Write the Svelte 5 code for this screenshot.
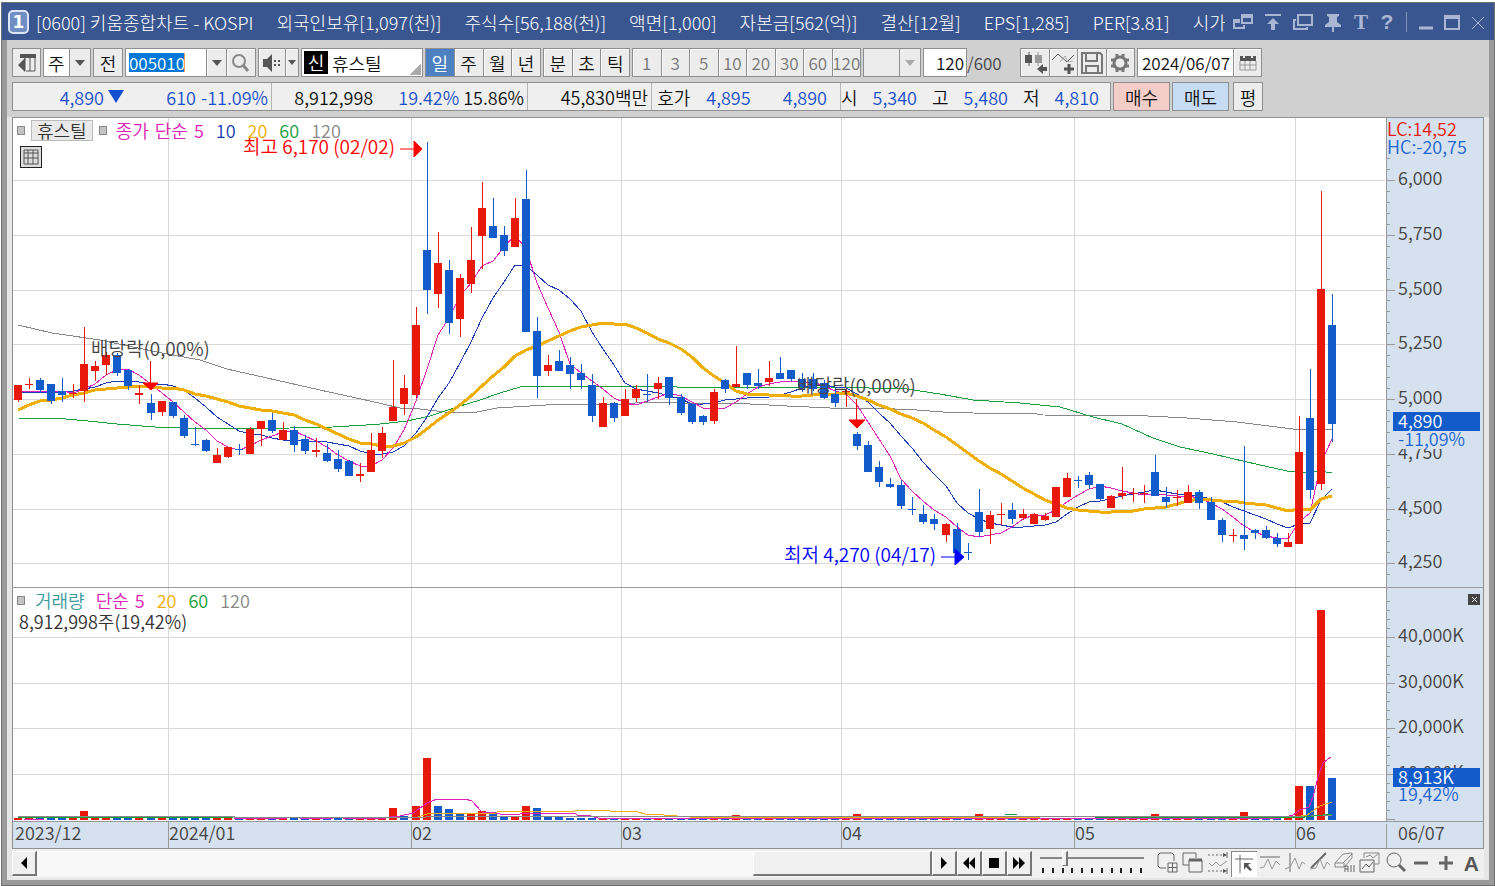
<script lang="ts">
  type Candle = [high: number, top: number, bottom: number, low: number, up: number];
  type Point = [number, number];

  const titleParts = [
    '[0600] 키움종합차트 - KOSPI',
    '외국인보유[1,097(천)]',
    '주식수[56,188(천)]',
    '액면[1,000]',
    '자본금[562(억)]',
    '결산[12월]',
    'EPS[1,285]',
    'PER[3.81]',
    '시가',
  ];

  const periods = ['일', '주', '월', '년'];
  const units = ['분', '초', '틱'];
  const counts = [1, 3, 5, 10, 20, 30, 60, 120];

  let code = '005010';
  let barCount = '120';
  let date = '2024/06/07';
  let period = '일';
  let speed = 2;

  // one row per trading day: high, body top, body bottom, low, up
  const candles: Candle[] = [
    [385, 385, 400, 402, 1], [378, 384, 385, 389, 1], [378, 380, 390, 393, 0], [384, 384, 401, 404, 0],
    [378, 391, 395, 402, 0], [384, 393, 394, 398, 1], [327, 364, 391, 402, 1], [361, 366, 371, 381, 1],
    [352, 355, 365, 375, 1], [353, 355, 373, 376, 0], [369, 370, 386, 390, 0], [385, 393, 395, 404, 1],
    [394, 403, 413, 420, 0], [401, 401, 412, 416, 1], [402, 402, 416, 418, 0], [415, 418, 436, 438, 0],
    [427, 444, 445, 446, 0], [439, 440, 451, 452, 0], [448, 455, 463, 463, 1], [447, 447, 457, 458, 1],
    [444, 449, 450, 455, 0], [427, 429, 454, 454, 1], [421, 421, 429, 446, 1], [413, 420, 431, 433, 0],
    [422, 430, 440, 440, 1], [426, 430, 445, 452, 0], [435, 439, 451, 454, 0], [438, 450, 452, 457, 1],
    [444, 453, 461, 462, 0], [450, 459, 469, 472, 0], [460, 461, 476, 476, 0], [463, 474, 476, 482, 1],
    [433, 450, 472, 472, 1], [427, 433, 451, 458, 1], [360, 407, 421, 421, 1], [375, 388, 404, 415, 1],
    [307, 325, 395, 398, 1], [142, 250, 290, 314, 0], [232, 263, 294, 308, 1], [260, 270, 323, 334, 0],
    [274, 278, 319, 337, 1], [227, 260, 284, 293, 1], [182, 208, 236, 269, 1], [198, 226, 238, 238, 0],
    [226, 235, 251, 256, 0], [198, 218, 247, 247, 1], [170, 199, 332, 332, 0], [317, 331, 376, 398, 0],
    [355, 365, 371, 376, 1], [350, 361, 371, 371, 0], [357, 365, 374, 389, 0], [364, 373, 380, 389, 0],
    [374, 385, 416, 422, 0], [397, 403, 427, 427, 1], [402, 403, 418, 422, 0], [389, 399, 416, 416, 1],
    [385, 389, 398, 402, 1], [374, 394, 395, 402, 0], [377, 383, 389, 399, 1], [377, 377, 398, 405, 0],
    [394, 397, 413, 415, 0], [404, 404, 422, 424, 0], [415, 416, 422, 425, 0], [389, 392, 421, 424, 1],
    [379, 380, 389, 393, 0], [346, 384, 387, 387, 1], [373, 373, 385, 389, 0], [369, 383, 386, 389, 0],
    [361, 378, 382, 386, 1], [357, 373, 379, 379, 0], [370, 370, 379, 381, 0], [373, 379, 387, 392, 0],
    [373, 379, 389, 391, 0], [380, 383, 398, 399, 0], [388, 394, 403, 407, 0], [389, 391, 392, 407, 1],
    [432, 434, 446, 450, 0], [441, 445, 472, 472, 0], [461, 467, 482, 487, 0], [478, 484, 487, 488, 0],
    [480, 485, 506, 509, 0], [497, 509, 510, 515, 0], [505, 514, 522, 524, 0], [514, 519, 524, 530, 0],
    [523, 524, 535, 542, 1], [523, 529, 553, 553, 0], [543, 552, 553, 560, 0], [489, 512, 532, 537, 0],
    [511, 515, 529, 544, 1], [503, 514, 515, 525, 1], [503, 510, 519, 524, 0], [509, 514, 518, 520, 1],
    [513, 514, 524, 524, 1], [513, 516, 520, 521, 1], [487, 487, 517, 517, 1], [473, 478, 497, 497, 1],
    [476, 480, 481, 488, 0], [472, 475, 485, 489, 0], [484, 484, 499, 500, 0], [495, 496, 508, 508, 1],
    [467, 493, 496, 499, 1], [488, 493, 494, 502, 1], [485, 493, 494, 503, 1], [455, 472, 496, 496, 0],
    [487, 497, 502, 508, 0], [490, 497, 498, 506, 1], [485, 492, 503, 503, 1], [490, 492, 503, 509, 0],
    [497, 502, 520, 520, 0], [518, 520, 535, 542, 0], [529, 535, 536, 542, 1], [446, 535, 539, 550, 0],
    [529, 530, 533, 539, 0], [526, 530, 538, 539, 0], [533, 538, 544, 547, 0], [533, 542, 547, 547, 1],
    [416, 452, 544, 544, 1], [369, 418, 490, 499, 0], [191, 289, 484, 490, 1], [294, 325, 424, 442, 0],
  ];

  // bars that rise above the usual thin strip: index -> top, colour
  const volumeTops: Record<number, [number, number]> = {
    6: [811, 1], 34: [808, 1], 35: [816, 0], 36: [806, 1], 37: [758, 1], 38: [806, 0], 39: [809, 0],
    40: [813, 0], 41: [813, 1], 42: [811, 1], 43: [812, 0], 44: [816, 0], 45: [816, 1], 46: [806, 1],
    47: [808, 0], 48: [816, 0], 49: [816, 0], 65: [815, 1], 76: [814, 1], 87: [814, 1], 103: [814, 1],
    111: [812, 1], 116: [786, 1], 117: [786, 0], 118: [610, 1], 119: [778, 0],
  };

  const step = 1314 / 119;
  const xAt = (i: number) => Math.round(18 + i * step);
  const closes = candles.map((c) => (c[4] ? c[1] : c[2]));

  function average(size: number, head: number[]): string {
    return candles
      .map((_, i) => {
        if (i < head.length) return `${xAt(i)},${head[i]}`;
        const part = closes.slice(i - size + 1, i + 1);
        return `${xAt(i)},${Math.round(part.reduce((a, b) => a + b, 0) / size)}`;
      })
      .join(' ');
  }

  const toPoints = (list: Point[]) => list.map((p) => p.join(',')).join(' ');

  const ma5 = average(5, [392, 391, 391, 391]);
  const ma10 = average(10, [392, 392, 392, 392, 392, 391, 389, 387, 383]);
  const ma20 = average(20, [410, 405, 401, 400, 398, 395, 393, 390, 389, 388, 387, 386, 387, 388, 388, 390, 394, 396, 399]);
  const ma60 = toPoints([
    [18, 418], [66, 419], [88, 421], [117, 424], [155, 427], [220, 429], [290, 428], [333, 427], [366, 425],
    [380, 424], [407, 421], [430, 416], [457, 407], [480, 400], [500, 393], [520, 387], [543, 386], [673, 386],
    [677, 387], [830, 387], [907, 389], [940, 394], [973, 400], [1020, 403], [1060, 407], [1093, 417],
    [1122, 424], [1153, 438], [1180, 447], [1213, 454], [1247, 462], [1287, 471], [1307, 473], [1320, 471], [1332, 473],
  ]);
  const ma120 = toPoints([
    [18, 325], [52, 333], [100, 340], [157, 352], [200, 360], [227, 369], [267, 378], [320, 390], [370, 401],
    [400, 408], [420, 409], [453, 413], [477, 412], [497, 408], [530, 406], [563, 404], [630, 404], [640, 402],
    [670, 402], [680, 403], [750, 404], [787, 406], [830, 408], [873, 408], [917, 410], [943, 412], [973, 413],
    [1037, 414], [1043, 415], [1148, 416], [1187, 418], [1237, 422], [1293, 429], [1332, 429],
  ]);

  const volume5 = toPoints([
    [390, 817], [400, 816], [413, 813], [427, 803], [437, 799], [465, 799], [472, 801], [482, 812],
    [490, 812], [500, 814], [520, 814], [522, 813], [575, 813], [577, 815], [587, 815], [598, 818],
    [1280, 818], [1293, 815], [1300, 810], [1309, 807], [1313, 797], [1318, 777], [1323, 763], [1331, 757],
  ]);
  const volume20 = toPoints([
    [418, 817], [427, 814], [440, 813], [496, 813], [498, 811], [575, 811], [576, 810], [608, 810],
    [610, 811], [638, 812], [645, 814], [664, 815], [690, 817], [1040, 817],
  ]);

  const months = [
    { x: 168, label: '2024/01' },
    { x: 411, label: '02' },
    { x: 621, label: '03' },
    { x: 841, label: '04' },
    { x: 1074, label: '05' },
    { x: 1295, label: '06' },
  ];
  const prices = [6000, 5750, 5500, 5250, 5000, 4750, 4500, 4250];
  const priceY = (p: number) => Math.round(180 + (6000 - p) * 0.219);
  const priceTicks = Array.from({ length: 39 }, (_, i) => 6100 - i * 50);
  const volumes = [40, 30, 20, 10];
  const volumeY = (v: number) => Math.round(819 - v * 4.54);
  const volumeTicks = Array.from({ length: 25 }, (_, i) => i * 2);
</script>

<div class="window">
  <header class="titlebar">
    <span class="badge">1</span>
    <h1>
      {#each titleParts as part}<span>{part}</span>{/each}
    </h1>
    <div class="title-tools">
      <button aria-label="link window">
        <svg width="20" height="20" viewBox="0 0 20 20"><path d="M9 3h10v8H9zM9 5h10M7 8H1v8h10v-3M1 10h6" /></svg>
      </button>
      <button aria-label="send to top">
        <svg width="20" height="20" viewBox="0 0 20 20"><path d="M2 3h16" stroke-width="2" /><path class="solid" d="M10 6l6 6h-4v6H8v-6H4z" /></svg>
      </button>
      <button aria-label="copy window">
        <svg width="20" height="20" viewBox="0 0 20 20"><path d="M5 3h14v10H5zM3 8H1v9h13v-2" /></svg>
      </button>
      <button aria-label="pin">
        <svg width="20" height="20" viewBox="0 0 20 20"><path class="solid" d="M4 2h12v2l-2 1v5l4 3v2h-7v5H9v-5H2v-2l4-3V5L4 4z" /></svg>
      </button>
      <button class="glyph serif">T</button>
      <button class="glyph">?</button>
      <i></i>
      <button aria-label="minimize">
        <svg width="16" height="20" viewBox="0 0 16 20"><path d="M1 16h14" stroke-width="3" /></svg>
      </button>
      <button aria-label="maximize">
        <svg width="16" height="20" viewBox="0 0 16 20"><path d="M1 4h14v13H1z" /><path d="M1 5h14" stroke-width="4" /></svg>
      </button>
      <button aria-label="close">
        <svg width="16" height="20" viewBox="0 0 16 20"><path d="M2 5l12 12M14 5L2 17" stroke-width="1" /></svg>
      </button>
    </div>
  </header>

  <div class="body">
    <div class="controls">
      <div class="toolbar">
        <button class="tool" aria-label="side panel">
          <svg width="20" height="22" viewBox="0 0 20 22">
            <path class="solid" d="M3 2h16v4H3zM8 6v14L1 13z" />
            <path d="M13 6v13M18 4v15H9M8 6v13" />
          </svg>
        </button>
        <label class="drop market">
          <select aria-label="시장"><option>주</option></select>
          <span class="arrow"></span>
        </label>
        <button class="tool prev">전</button>
        <div class="group code">
          <span class="field"><input bind:value={code} aria-label="종목코드" /></span>
          <button aria-label="code list"><span class="caret"></span></button>
          <button class="search" aria-label="search">
            <svg width="20" height="20" viewBox="0 0 20 20"><circle cx="8" cy="8" r="6" stroke="#888" stroke-width="2" /><path d="M12 12l5 6" stroke="#888" stroke-width="3" /></svg>
          </button>
        </div>
        <div class="group sound">
          <button class="wide" aria-label="sound">
            <svg width="20" height="20" viewBox="0 0 20 20"><path class="solid" d="M1 6h4l5-5v18l-5-5H1z" /><path d="M12 8h2m2 0h2M12 12h2m2 0h2" stroke-width="2" /></svg>
          </button>
          <button aria-label="sound options"><span class="caret small"></span></button>
        </div>
        <div class="name"><b>신</b><span>휴스틸</span></div>
        <div class="group periods">
          {#each periods as p}
            <button class:active={period === p} onclick={() => (period = p)}>{p}</button>
          {/each}
        </div>
        <div class="group units">
          {#each units as unit}<button>{unit}</button>{/each}
        </div>
        <div class="group counts">
          {#each counts as count}<button disabled>{count}</button>{/each}
        </div>
        <label class="drop custom">
          <select aria-label="주기" disabled><option></option></select>
          <span class="arrow"></span>
        </label>
        <label class="bars">
          <input bind:value={barCount} />
          <span>/600</span>
        </label>
        <div class="group icons">
          <button aria-label="chart type">
            <svg width="24" height="24" viewBox="0 0 24 24"><path d="M6 1v14" stroke-width="1" /><path d="M15 1v14" stroke="#999" stroke-width="1" /><path class="solid" d="M2 4h7v8H2z" /><path d="M12 4h7v8h-7z" fill="#999" stroke="none" /><path class="solid" d="M14 18l6-5v3h4v4h-4v3z" /></svg>
          </button>
          <button aria-label="add indicator">
            <svg width="24" height="24" viewBox="0 0 24 24"><path d="M1 9l6-6 9 8 7-7" stroke-width="1" /><path d="M9 11l5-6 3 6 5-1" stroke="#aaa" stroke-width="1" /><path d="M13 18h10M18 13v10" stroke-width="3" /></svg>
          </button>
          <button aria-label="save">
            <svg width="24" height="24" viewBox="0 0 24 24"><path d="M2 2h18l2 2v18H2zM6 2v8h11V2M6 22v-7h12v7" stroke="#777" /></svg>
          </button>
          <button aria-label="settings">
            <svg width="24" height="24" viewBox="0 0 24 24" stroke="#777"><circle cx="12" cy="12" r="6" stroke="#777" stroke-width="3" /><path d="M9 3v4m6-4v4M9 17v4m6-4v4M3 9h4m-4 6h4m10-6h4m-4 6h4" stroke="#777" stroke-width="3" /></svg>
          </button>
        </div>
        <div class="group date">
          <input bind:value={date} aria-label="날짜" />
          <button aria-label="calendar">
            <svg width="20" height="20" viewBox="0 0 20 20"><path class="solid" d="M2 3h16v5H2z" /><path d="M2 8v9h16V8M7 8v9m5-9v9M2 12h16" stroke="#999" stroke-width="1" /><path d="M6 2v3m8-3v3" stroke="#eee" /></svg>
          </button>
        </div>
      </div>

      <div class="quote-row">
        <div class="quotes">
          <div class="cell change">
            <span class="down">4,890</span><span class="triangle"></span>
            <span class="down amount">610</span><span class="down rate">-11.09%</span>
          </div>
          <div class="cell volume">
            <span>8,912,998</span><span class="down rate">19.42%</span><span>15.86%</span>
          </div>
          <div class="cell value">45,830백만</div>
          <div class="cell bid">
            <span>호가</span><span class="down">4,895</span><span class="down">4,890</span>
          </div>
          <div class="cell range">
            <span>시</span><span class="down">5,340</span>
            <span>고</span><span class="down">5,480</span>
            <span>저</span><span class="down">4,810</span>
          </div>
        </div>
        <button class="buy">매수</button>
        <button class="sell">매도</button>
        <button class="avg">평</button>
      </div>
    </div>

    <main>
      <div class="chart">
        <section class="panel">
          <div class="legend">
            <i></i><button class="stock">휴스틸</button><i class="second"></i>
            <span class="ma5">종가</span><span class="ma5">단순</span><span class="ma5">5</span>
            <span class="ma10 apart">10</span><span class="ma20 apart">20</span>
            <span class="ma60 apart">60</span><span class="ma120 apart">120</span>
          </div>
          <button class="table" aria-label="data table">
            <svg width="16" height="16" viewBox="0 0 16 16"><path d="M1 1h14v14H1zM1 4h14M1 9h14M5 1v14M10 1v14" /></svg>
          </button>
          <svg class="plot" viewBox="13 118 1470 470">
            <g class="grid">
              {#each prices as p}<path d="M13 {priceY(p)}.5H1385" />{/each}
              {#each months as m}<path d="M{m.x}.5 118V588" />{/each}
            </g>
            <g class="crisp">
              <polyline class="line gray" points={ma120} />
              <polyline class="line green" points={ma60} />
              <polyline class="line navy" points={ma10} />
              <polyline class="line pink" points={ma5} />
              <polyline class="line gold thick" points={ma20} />
              {#each candles as [high, top, bottom, low, up], i}
                <g class={up ? 'up' : 'dn'}>
                  <rect x={xAt(i)} y={high} width="1" height={low - high} />
                  <rect x={xAt(i) - 4} y={top} width="8" height={Math.max(bottom - top, 1)} />
                </g>
              {/each}
            </g>

            <path class="event" d="M150.5 361V384M143 383h15l-7 7zM856.5 399V420M849 420h16l-8 8z" />
            <text class="note" x="91" y="356">배당락(0,00%)</text>
            <text class="note" x="797" y="393">배당락(0,00%)</text>
            <text class="highest" x="243" y="154">최고 6,170 (02/02)</text>
            <path class="event" d="M400 149H416M414 141l8 8-8 8z" />
            <text class="lowest" x="784" y="562">최저 4,270 (04/17)</text>
            <path class="event blue" d="M941 557H957M955 549l9 8-9 8z" />

            <rect class="axis" x="1386" y="118" width="97" height="470" />
            <path class="rule" d="M1386.5 118V588M13 587.5H1483" />
            <g class="ticks">
              {#each priceTicks as p}<path d="M1387 {priceY(p)}.5h3" />{/each}
              {#each prices as p}
                <path d="M1387 {priceY(p)}.5h8" />
                <text x="1398" y={priceY(p) + 5}>{p.toLocaleString('en-US')}</text>
              {/each}
            </g>
            <text class="lc" x="1387" y="136">LC:14,52</text>
            <text class="hc" x="1387" y="154">HC:-20,75</text>
            <rect class="axis" x="1397" y="431" width="80" height="18" />
            <rect class="tag" x="1393" y="412" width="87" height="19" />
            <text class="tag-text" x="1398" y="428">4,890</text>
            <text class="hc" x="1398" y="446">-11,09%</text>
          </svg>
        </section>

        <section class="panel">
          <div class="legend">
            <i></i><span class="teal">거래량</span>
            <span class="ma5">단순</span><span class="ma5">5</span><span class="ma20 apart">20</span>
            <span class="ma60 apart">60</span><span class="ma120 apart">120</span>
          </div>
          <p class="total">8,912,998주(19,42%)</p>
          <button class="close" aria-label="close panel">
            <svg width="12" height="11" viewBox="0 0 12 11"><path d="M4 3l5 5M9 3L4 8" /></svg>
          </button>
          <svg class="plot" viewBox="13 588 1470 234">
            <g class="grid">
              {#each volumes as v}<path d="M13 {volumeY(v)}.5H1385" />{/each}
              {#each months as m}<path d="M{m.x}.5 588V822" />{/each}
            </g>
            <g class="crisp">
              {#each candles as c, i}
                {@const [top, up] = volumeTops[i] ?? [818, c[4]]}
                <rect class={up ? 'up' : 'dn'} x={xAt(i) - 4} y={top} width="8" height={820 - top} />
              {/each}
              <path class="line pink" d="M24 819.5H44M234 818.5H287M300 818.5H333M343 818.5H386M1041 818.5H1094" />
              <polyline class="line pink" points={volume5} />
              <polyline class="line gold" points={volume20} />
              <path class="line gold" d="M1295 817L1307 815 1320 806 1332 802" />
              <path class="line gray" d="M18 816.5H233L236 817.5H413L440 816.5H1300L1332 815" />
              <path class="line green" d="M18 817.5H233M1005 814.5H1017M1095 817.5H1300L1332 814" />
            </g>
            <rect class="axis" x="1386" y="588" width="97" height="234" />
            <path class="rule" d="M1386.5 588V822M13 821.5H1483" />
            <g class="ticks">
              {#each volumeTicks as v}<path d="M1387 {volumeY(v)}.5h3" />{/each}
              {#each volumes as v}
                <path d="M1387 {volumeY(v)}.5h8" />
                <text x="1398" y={volumeY(v) + 5}>{v},000K</text>
              {/each}
              <path d="M1387 819.5h8" />
            </g>
            <rect class="axis" x="1397" y="787" width="80" height="18" />
            <rect class="tag" x="1393" y="768" width="87" height="19" />
            <text class="tag-text" x="1398" y="784">8,913K</text>
            <text class="hc" x="1398" y="801">19,42%</text>
          </svg>
        </section>

        <svg class="plot" viewBox="13 822 1470 26">
          <rect class="axis" x="13" y="822" width="1470" height="26" />
          <g class="ticks">
            <text x="15" y="840">2023/12</text>
            {#each months as m}
              <path d="M{m.x}.5 822V848" />
              <text x={m.x + 1} y="840">{m.label}</text>
            {/each}
            <path d="M1386.5 824V848" />
            <text x="1398" y="840">06/07</text>
          </g>
        </svg>
      </div>

      <div class="bottom">
        <button class="raised" aria-label="scroll left"><svg width="10" height="12" viewBox="0 0 10 12"><path d="M8 0v12L2 6z" /></svg></button>
        <div class="track"><div class="thumb"></div></div>
        <button class="raised" aria-label="scroll right"><svg width="10" height="12" viewBox="0 0 10 12"><path d="M2 0v12l6-6z" /></svg></button>
        <button class="raised" aria-label="rewind"><svg width="14" height="12" viewBox="0 0 14 12"><path d="M7 0v12L1 6zM13 0v12L7 6z" /></svg></button>
        <button class="raised" aria-label="stop"><svg width="10" height="12" viewBox="0 0 10 12"><path d="M0 1h10v10H0z" /></svg></button>
        <button class="raised" aria-label="forward"><svg width="14" height="12" viewBox="0 0 14 12"><path d="M1 0v12l6-6zM7 0v12l6-6z" /></svg></button>
        <div class="speed">
          <input type="range" min="0" max="9" bind:value={speed} aria-label="speed" />
          <div class="marks">
            {#each Array(11) as _}<i></i>{/each}
          </div>
        </div>
        <div class="draw-tools">
          <button aria-label="add window"><svg width="22" height="24" viewBox="0 0 22 24"><path d="M9 17H3l-2-2V4l2-2h12l2 2v6M11 12h9v9h-9zM15.5 12v9M11 16.5h9" /></svg></button>
          <button aria-label="overlap"><svg width="22" height="24" viewBox="0 0 22 24"><path d="M7 14H1V2h13v5M7 9h13v12H7z" /><path d="M7 9h13" stroke-width="3" /></svg></button>
          <button aria-label="range"><svg width="22" height="24" viewBox="0 0 22 24"><path d="M1 4h16M1 20h16" stroke-dasharray="2 2" /><path d="M20 1v6M20 17v6" /><path class="solid" d="M16 2l4 2-4 2zM16 18l4 2-4 2z" /><path d="M2 12l3 3 4-4 4 4 7-5" stroke="#999" /></svg></button>
          <button class="pressed" aria-label="cross"><svg width="22" height="24" viewBox="0 0 22 24"><path d="M7 3v18M2 7h18" /><path class="solid" d="M11 11h7l-3 2 4 5-2 1-4-4-2 3z" /></svg></button>
          <button aria-label="horizontal line"><svg width="22" height="24" viewBox="0 0 22 24"><path d="M1 6h20" /><path d="M1 17l4-1 4-8 4 10 4-8 4 4" stroke="#999" /></svg></button>
          <button aria-label="vertical line"><svg width="22" height="24" viewBox="0 0 22 24"><path d="M6 2v19" /><path d="M1 18l5-2 5-9 4 11 3-7 3 2" stroke="#999" /></svg></button>
          <button aria-label="trend line"><svg width="22" height="24" viewBox="0 0 22 24"><path d="M2 17L17 2" stroke-width="2" /><path d="M1 18l6-1 4-9 4 10 3-7 3 3" stroke="#999" /></svg></button>
          <button aria-label="erase all"><svg width="22" height="24" viewBox="0 0 22 24"><path d="M1 12l8-9 9-1v5l-8 9H1zM1 12h8l9-9M10 12v4" stroke="#888" /><path d="M11 21v-6h3v6M11 18h3M17 14v7M20 14v7" /></svg></button>
          <button aria-label="compare"><svg width="22" height="24" viewBox="0 0 22 24"><path d="M5 7V2h15v11h-5" stroke="#888" /><path d="M7 6l4-2 3 3 5-4" stroke="#888" /><path d="M1 9h14v12H1zM3 18l4-5 3 3 4-5" /></svg></button>
          <button aria-label="zoom"><svg width="22" height="24" viewBox="0 0 22 24"><circle cx="9" cy="9" r="7" /><path d="M14 14l6 6" stroke-width="3" /></svg></button>
          <button aria-label="zoom out"><svg width="22" height="24" viewBox="0 0 22 24"><path d="M4 12h14" stroke-width="3" /></svg></button>
          <button aria-label="zoom in"><svg width="22" height="24" viewBox="0 0 22 24"><path d="M4 12h14M11 5v14" stroke-width="3" /></svg></button>
          <button class="letter">A</button>
        </div>
      </div>
    </main>
  </div>
</div>

<style>
  :global(body) {
    margin: 0;
    background: #fff;
  }

  .window {
    box-sizing: border-box;
    margin: 2px 0 0 1px;
    border: 1px solid #6f6f6f;
    font-family: 'Noto Sans CJK KR', 'Noto Sans', sans-serif;
    font-size: 18px;
    font-weight: 350;
    line-height: 24px;
    color: #111;
  }

  .window * {
    box-sizing: border-box;
  }

  button,
  input,
  select {
    margin: 0;
    padding: 0;
    border: 0;
    border-radius: 0;
    font: inherit;
    color: inherit;
    background: none;
  }

  svg {
    display: block;
    fill: none;
    stroke: #555;
  }

  .solid {
    fill: #555;
    stroke: none;
  }

  .titlebar {
    display: flex;
    align-items: center;
    height: 37px;
    padding: 0 8px 0 6px;
    background: #3a5690;
    color: #fff;
  }

  .badge {
    width: 21px;
    height: 24px;
    border: 2px solid #dbe5f5;
    border-radius: 5px;
    background: #6f8fc4;
    font: bold 17px/20px 'DejaVu Sans', sans-serif;
    text-align: center;
  }

  h1 {
    display: flex;
    flex: 1;
    gap: 23px;
    min-width: 0;
    margin: 0 8px 0 7px;
    overflow: hidden;
    font-size: 18px;
    font-weight: 300;
    white-space: nowrap;
  }

  .title-tools {
    display: flex;
    align-items: center;
    gap: 10px;
    color: #a9b7d4;
  }

  .title-tools svg {
    stroke: #a9b7d4;
    stroke-width: 2;
  }

  .title-tools .solid {
    fill: #a9b7d4;
  }

  .title-tools i {
    width: 1px;
    height: 20px;
    margin: 0 1px;
    background: #7f93bd;
  }

  .glyph {
    width: 16px;
    font: bold 21px/24px 'Liberation Sans', sans-serif;
  }

  .serif {
    font-family: 'Liberation Serif', serif;
  }

  .body {
    border: solid #9a9a9a;
    border-width: 0 5px 5px;
    background: #e6e6e6;
  }

  .controls {
    display: flex;
    flex-direction: column;
    gap: 5px;
    padding: 8px 5px 6px;
    background: #d0d0d0;
  }

  .toolbar,
  .quote-row {
    display: flex;
    gap: 2px;
    height: 29px;
  }

  .tool,
  .group,
  .drop,
  .name,
  .bars input {
    display: flex;
    align-items: center;
    justify-content: center;
    flex: none;
    border: 1px solid #8f8f8f;
    background: #ececec;
  }

  .tool {
    width: 29px;
  }

  .prev {
    width: 30px;
  }

  .group {
    align-items: stretch;
  }

  .group button {
    display: flex;
    flex: 1;
    align-items: center;
    justify-content: center;
    min-width: 0;
    border-left: 1px solid #8f8f8f;
    background: #ececec;
    box-shadow: inset 1px 1px #fafafa;
    overflow: hidden;
  }

  .group button:first-child {
    border-left: 0;
  }

  .group button.active {
    background: #4d80c1;
    box-shadow: none;
    color: #fff;
  }

  .group button:disabled {
    color: #777;
  }

  .drop {
    position: relative;
  }

  .drop select {
    width: 100%;
    height: 100%;
    padding-left: 4px;
    appearance: none;
    background: #fff;
  }

  .drop .arrow {
    position: absolute;
    top: 0;
    right: 0;
    width: 21px;
    height: 27px;
    border-left: 1px solid #8f8f8f;
    background: #ececec;
    pointer-events: none;
  }

  .drop .arrow::after,
  .caret {
    display: block;
    width: 0;
    border: solid transparent;
    border-width: 6px 5px 0;
    border-top-color: #555;
    content: '';
  }

  .drop .arrow::after {
    margin: 11px 5px;
  }

  .caret.small {
    border-width: 5px 4px 0;
    border-top-color: #555;
  }

  .market {
    width: 48px;
  }

  .custom {
    width: 58px;
  }

  .custom select {
    background: #ececec;
  }

  .drop.custom .arrow::after {
    border-top-color: #aaa;
  }

  .code {
    width: 131px;
  }

  .code .field {
    display: flex;
    align-items: center;
    width: 80px;
    padding-left: 3px;
    background: #fff;
  }

  .field input {
    width: 56px;
    height: 19px;
    border-right: 1px solid #f0a050;
    background: #0078d7;
    color: #fff;
    font-size: 17px;
    line-height: 19px;
  }

  .code .search {
    flex: none;
    width: 29px;
  }

  .sound {
    width: 41px;
  }

  .sound .wide {
    flex: none;
    width: 26px;
  }

  .name {
    justify-content: flex-start;
    gap: 4px;
    width: 122px;
    padding-left: 2px;
    background: linear-gradient(135deg, transparent 50%, #aaa 50%) right 1px bottom 1px / 11px 11px no-repeat #fff;
  }

  .name b {
    width: 24px;
    height: 23px;
    background: #000;
    color: #fff;
    font-weight: 350;
    line-height: 22px;
    text-align: center;
  }

  .periods {
    width: 116px;
  }

  .units {
    width: 87px;
  }

  .counts {
    width: 229px;
    font-size: 17px;
  }

  .bars {
    display: flex;
    align-items: center;
    width: 95px;
    color: #444;
    font-size: 17px;
  }

  .bars input {
    width: 44px;
    height: 29px;
    padding-right: 2px;
    background: #fff;
    color: #111;
    text-align: right;
  }

  .icons {
    width: 115px;
  }

  .icons svg,
  .date svg {
    stroke-width: 2;
  }

  .date {
    width: 125px;
    font-size: 17px;
  }

  .date input {
    width: 95px;
    padding-left: 4px;
    background: #fff;
  }

  .quotes {
    display: flex;
    width: 1099px;
    border: 1px solid #8f8f8f;
    background: #efefef;
  }

  .cell {
    display: flex;
    align-items: center;
    justify-content: flex-end;
    padding-right: 3px;
    border-left: 1px solid #b5b5b5;
  }

  .cell:first-child {
    border-left: 0;
  }

  .down {
    color: #1d50c8;
  }

  .triangle {
    margin-left: 4px;
    border: solid transparent;
    border-width: 13px 8px 0;
    border-top-color: #0f4fd0;
  }

  .change {
    width: 258px;
  }

  .amount {
    width: 72px;
    text-align: right;
  }

  .rate {
    width: 72px;
    text-align: right;
  }

  .volume {
    width: 256px;
  }

  .volume .rate {
    width: 86px;
    margin-right: 4px;
  }

  .value {
    width: 124px;
  }

  .bid {
    gap: 16px;
    width: 189px;
    padding-right: 13px;
  }

  .bid span:last-child {
    margin-left: 16px;
  }

  .range {
    flex: 1;
    justify-content: space-between;
    padding: 0 11px 0 0;
  }

  .buy,
  .sell,
  .avg {
    width: 57px;
    border: 1px solid #8f8f8f;
    background: #f4cdc8;
  }

  .sell {
    background: #c5dcf3;
  }

  .avg {
    width: 30px;
    margin-left: 2px;
    background: #ececec;
  }

  main {
    padding: 0 5px 2px;
  }

  .chart {
    border: 1px solid #8f8f8f;
    background: #fff;
  }

  .panel {
    position: relative;
  }

  .plot {
    width: 100%;
    height: auto;
  }

  .plot text {
    fill: #444;
    stroke: none;
    font-size: 18px;
  }

  .grid {
    stroke: #d8d8d8;
  }

  .crisp {
    shape-rendering: crispEdges;
  }

  .up {
    fill: #e8190a;
    stroke: none;
  }

  .dn {
    fill: #115bcb;
    stroke: none;
  }

  .line {
    stroke-width: 1;
  }

  .thick {
    stroke-width: 3;
  }

  .gray {
    stroke: #888;
  }

  .green {
    stroke: #16a03c;
  }

  .navy {
    stroke: #1a3cb4;
  }

  .pink {
    stroke: #e020b8;
  }

  .gold {
    stroke: #f0ae00;
  }

  .event {
    fill: #f00;
    stroke: #f00;
  }

  .event.blue {
    fill: #00f;
    stroke: #00f;
  }

  .plot .note,
  .plot .highest,
  .plot .lowest {
    font-size: 19px;
  }

  .plot .highest {
    fill: #f00;
  }

  .plot .lowest {
    fill: #00f;
  }

  .axis {
    fill: #d6e1ef;
    stroke: none;
  }

  .rule,
  .ticks {
    stroke: #999;
  }

  .plot .lc {
    fill: #e8190a;
  }

  .plot .hc {
    fill: #1b66d0;
  }

  .tag {
    fill: #115bcb;
    stroke: none;
  }

  .plot .tag-text {
    fill: #fff;
  }

  .legend {
    position: absolute;
    top: 0;
    left: 4px;
    display: flex;
    align-items: center;
    gap: 6px;
  }

  .legend i {
    width: 8px;
    height: 9px;
    border: 1px solid #888;
    background: #c4c4c4;
  }

  .legend .second {
    margin-right: 3px;
  }

  .legend .apart {
    margin-left: 6px;
  }

  .legend .teal {
    margin: 0 5px 0 4px;
  }

  .stock {
    height: 21px;
    padding: 0 5px;
    border: 1px solid #bbb;
    background: #e9e9e9;
    color: #333;
    line-height: 19px;
  }

  .ma5 {
    color: #e020b8;
  }

  .ma10 {
    color: #1a3cb4;
  }

  .ma20 {
    color: #f0ae00;
  }

  .ma60 {
    color: #16a03c;
  }

  .ma120 {
    color: #888;
  }

  .teal {
    color: #3a9a9c;
  }

  .table {
    position: absolute;
    top: 28px;
    left: 7px;
    padding: 2px;
    border: 1px solid #222;
    background: #ddd;
  }

  .total {
    position: absolute;
    top: 21px;
    left: 6px;
    margin: 0;
    color: #333;
  }

  .close {
    position: absolute;
    top: 6px;
    right: 3px;
    background: #444;
  }

  .close svg {
    stroke: #fff;
  }

  .bottom {
    display: flex;
    align-items: center;
    height: 29px;
    background: #f0f0f0;
  }

  .raised,
  .thumb {
    display: flex;
    flex: none;
    align-items: center;
    justify-content: center;
    width: 25px;
    height: 25px;
    border: solid;
    border-width: 1px 2px 2px 1px;
    border-color: #fff #777 #777 #fff;
    background: #f0f0f0;
  }

  .raised svg {
    fill: #000;
    stroke: none;
  }

  .track {
    display: flex;
    flex: 1;
    justify-content: flex-end;
    background: #f8f8f8;
  }

  .thumb {
    width: 20%;
  }

  .speed {
    width: 104px;
    margin: 0 11px 0 8px;
  }

  .speed input {
    display: block;
    width: 100%;
    height: 16px;
    appearance: none;
    background: linear-gradient(#888, #888) center / 100% 2px no-repeat;
  }

  .speed input::-webkit-slider-thumb {
    width: 6px;
    height: 15px;
    border: solid;
    border-width: 1px 2px 1px 1px;
    border-color: #fff #777 #777 #fff;
    background: #f0f0f0;
    appearance: none;
  }

  .marks {
    display: flex;
    justify-content: space-between;
    padding: 2px 2px 4px;
  }

  .marks i {
    width: 2px;
    height: 5px;
    background: #222;
  }

  .draw-tools {
    display: flex;
    flex: none;
    width: 329px;
  }

  .draw-tools button {
    display: flex;
    flex: 1;
    justify-content: center;
  }

  .draw-tools svg {
    stroke: #666;
  }

  .draw-tools .pressed {
    border: solid #888;
    border-width: 1px 0 0 1px;
    background: #fff;
  }

  .draw-tools .letter {
    color: #555;
    font: bold 21px/26px 'Liberation Sans', sans-serif;
  }
</style>
